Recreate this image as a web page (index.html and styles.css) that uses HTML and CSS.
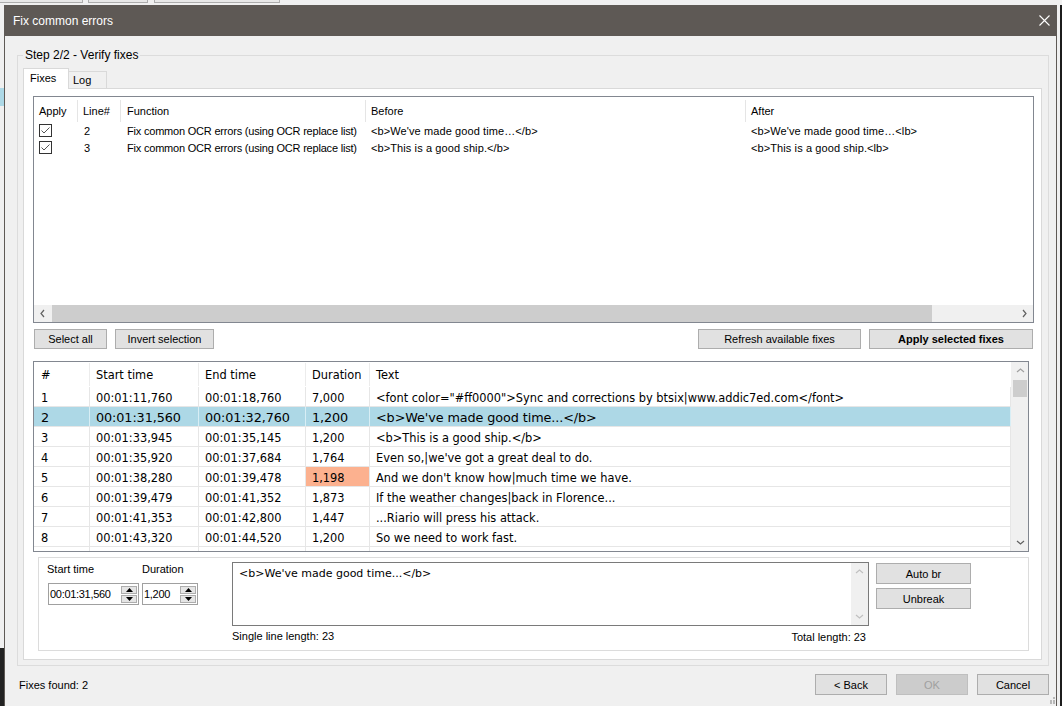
FILE: index.html
```html
<!DOCTYPE html>
<html lang="en">
<head>
    <meta charset="UTF-8">
    <title>Fix common errors</title>
    <link rel="stylesheet" href="styles.css">
</head>
<body>
<div class="desk">
    <div class="desk-top">
        <div class="ghost g1"></div>
        <div class="ghost g2"></div>
        <div class="ghost g3"></div>
    </div>
    <div class="desk-row">
        <div class="desk-left"></div>
        <div class="window">
            <div class="titlebar">
                <span class="title">Fix common errors</span>
                <svg class="close" width="11" height="11" viewBox="0 0 11 11">
                    <path d="M0.5 0.5 L10.5 10.5 M10.5 0.5 L0.5 10.5" stroke="#fff" stroke-width="1.1"/>
                </svg>
            </div>
            <div class="win-body">
                <fieldset class="group">
                    <legend>Step 2/2 - Verify fixes</legend>
                    <div class="tabs">
                        <div class="tab active">Fixes</div>
                        <div class="tab">Log</div>
                    </div>
                    <div class="tab-page">
                        <!-- fixes list -->
                        <div class="lv">
                            <div class="lv-head">
                                <div class="lc c1">Apply</div>
                                <div class="lc c2">Line#</div>
                                <div class="lc c3">Function</div>
                                <div class="lc c4">Before</div>
                                <div class="lc c5">After</div>
                            </div>
                            <div class="lv-row">
                                <div class="lc c1"><svg class="chk" width="13" height="13" viewBox="0 0 13 13"><rect x="0.5" y="0.5" width="12" height="12" fill="#fff" stroke="#333"/><path d="M2.5 6.5 L5 9 L10.5 3.5" fill="none" stroke="#555" stroke-width="1"/></svg></div>
                                <div class="lc c2">2</div>
                                <div class="lc c3">Fix common OCR errors (using OCR replace list)</div>
                                <div class="lc c4">&lt;b&gt;We've made good time…&lt;/b&gt;</div>
                                <div class="lc c5">&lt;b&gt;We've made good time…&lt;lb&gt;</div>
                            </div>
                            <div class="lv-row">
                                <div class="lc c1"><svg class="chk" width="13" height="13" viewBox="0 0 13 13"><rect x="0.5" y="0.5" width="12" height="12" fill="#fff" stroke="#333"/><path d="M2.5 6.5 L5 9 L10.5 3.5" fill="none" stroke="#555" stroke-width="1"/></svg></div>
                                <div class="lc c2">3</div>
                                <div class="lc c3">Fix common OCR errors (using OCR replace list)</div>
                                <div class="lc c4">&lt;b&gt;This is a good ship.&lt;/b&gt;</div>
                                <div class="lc c5">&lt;b&gt;This is a good ship.&lt;lb&gt;</div>
                            </div>
                            <div class="lv-fill"></div>
                            <div class="hscroll">
                                <svg class="arr" width="17" height="17" viewBox="0 0 17 17"><path d="M10 5 L7 8.5 L10 12" fill="none" stroke="#606060" stroke-width="1.2"/></svg>
                                <div class="h-track"><div class="h-thumb"></div></div>
                                <svg class="arr" width="17" height="17" viewBox="0 0 17 17"><path d="M7 5 L10 8.5 L7 12" fill="none" stroke="#606060" stroke-width="1.2"/></svg>
                            </div>
                        </div>

                        <div class="btn-row">
                            <div class="btn-set">
                                <button class="btn w-sel">Select all</button>
                                <button class="btn w-inv">Invert selection</button>
                            </div>
                            <div class="btn-set">
                                <button class="btn w-ref">Refresh available fixes</button>
                                <button class="btn w-app bold">Apply selected fixes</button>
                            </div>
                        </div>

                        <!-- subtitle grid -->
                        <div class="grid">
                            <div class="grid-main">
                                <div class="g-head">
                                    <div class="gc k1">#</div>
                                    <div class="gc k2">Start time</div>
                                    <div class="gc k3">End time</div>
                                    <div class="gc k4">Duration</div>
                                    <div class="gc k5">Text</div>
                                </div>
                                <div class="g-row">
                                    <div class="gc k1">1</div><div class="gc k2">00:01:11,760</div><div class="gc k3">00:01:18,760</div><div class="gc k4">7,000</div><div class="gc k5">&lt;font color="#ff0000"&gt;Sync and corrections by btsix|www.addic7ed.com&lt;/font&gt;</div>
                                </div>
                                <div class="g-row selected">
                                    <div class="gc k1">2</div><div class="gc k2">00:01:31,560</div><div class="gc k3">00:01:32,760</div><div class="gc k4">1,200</div><div class="gc k5">&lt;b&gt;We've made good time...&lt;/b&gt;</div>
                                </div>
                                <div class="g-row">
                                    <div class="gc k1">3</div><div class="gc k2">00:01:33,945</div><div class="gc k3">00:01:35,145</div><div class="gc k4">1,200</div><div class="gc k5">&lt;b&gt;This is a good ship.&lt;/b&gt;</div>
                                </div>
                                <div class="g-row">
                                    <div class="gc k1">4</div><div class="gc k2">00:01:35,920</div><div class="gc k3">00:01:37,684</div><div class="gc k4">1,764</div><div class="gc k5">Even so,|we've got a great deal to do.</div>
                                </div>
                                <div class="g-row">
                                    <div class="gc k1">5</div><div class="gc k2">00:01:38,280</div><div class="gc k3">00:01:39,478</div><div class="gc k4 warn">1,198</div><div class="gc k5">And we don't know how|much time we have.</div>
                                </div>
                                <div class="g-row">
                                    <div class="gc k1">6</div><div class="gc k2">00:01:39,479</div><div class="gc k3">00:01:41,352</div><div class="gc k4">1,873</div><div class="gc k5">If the weather changes|back in Florence...</div>
                                </div>
                                <div class="g-row">
                                    <div class="gc k1">7</div><div class="gc k2">00:01:41,353</div><div class="gc k3">00:01:42,800</div><div class="gc k4">1,447</div><div class="gc k5">...Riario will press his attack.</div>
                                </div>
                                <div class="g-row">
                                    <div class="gc k1">8</div><div class="gc k2">00:01:43,320</div><div class="gc k3">00:01:44,520</div><div class="gc k4">1,200</div><div class="gc k5">So we need to work fast.</div>
                                </div>
                                <div class="g-row partial">
                                    <div class="gc k1"></div><div class="gc k2"></div><div class="gc k3"></div><div class="gc k4"></div><div class="gc k5"></div>
                                </div>
                            </div>
                            <div class="vscroll">
                                <svg width="17" height="17" viewBox="0 0 17 17"><path d="M5 10 L8.5 7 L12 10" fill="none" stroke="#a0a0a0" stroke-width="1.2"/></svg>
                                <div class="v-track"><div class="v-thumb"></div></div>
                                <svg width="17" height="17" viewBox="0 0 17 17"><path d="M5 7 L8.5 10 L12 7" fill="none" stroke="#606060" stroke-width="1.2"/></svg>
                            </div>
                        </div>

                        <!-- current line editor -->
                        <div class="edit">
                            <div class="edit-left">
                                <div class="field f-start">
                                    <label>Start time</label>
                                    <div class="spin">
                                        <span class="spin-val">00:01:31,560</span>
                                        <div class="spin-btns">
                                            <div class="spin-b"><svg width="7" height="4" viewBox="0 0 7 4"><path d="M0 4 L3.5 0 L7 4 Z" fill="#000"/></svg></div>
                                            <div class="spin-b"><svg width="7" height="4" viewBox="0 0 7 4"><path d="M0 0 L3.5 4 L7 0 Z" fill="#000"/></svg></div>
                                        </div>
                                    </div>
                                </div>
                                <div class="field f-dur">
                                    <label>Duration</label>
                                    <div class="spin">
                                        <span class="spin-val">1,200</span>
                                        <div class="spin-btns">
                                            <div class="spin-b"><svg width="7" height="4" viewBox="0 0 7 4"><path d="M0 4 L3.5 0 L7 4 Z" fill="#000"/></svg></div>
                                            <div class="spin-b"><svg width="7" height="4" viewBox="0 0 7 4"><path d="M0 0 L3.5 4 L7 0 Z" fill="#000"/></svg></div>
                                        </div>
                                    </div>
                                </div>
                            </div>
                            <div class="edit-mid">
                                <div class="textbox">
                                    <div class="tb-text">&lt;b&gt;We've made good time...&lt;/b&gt;</div>
                                    <div class="tb-scroll">
                                        <svg width="17" height="17" viewBox="0 0 17 17"><path d="M5 10 L8.5 7 L12 10" fill="none" stroke="#c0c0c0" stroke-width="1.2"/></svg>
                                        <svg width="17" height="17" viewBox="0 0 17 17"><path d="M5 7 L8.5 10 L12 7" fill="none" stroke="#c0c0c0" stroke-width="1.2"/></svg>
                                    </div>
                                </div>
                                <div class="lengths">
                                    <span>Single line length: 23</span>
                                    <span class="total">Total length: 23</span>
                                </div>
                            </div>
                            <div class="edit-right">
                                <button class="btn w-small">Auto br</button>
                                <button class="btn w-small">Unbreak</button>
                            </div>
                        </div>
                    </div>
                </fieldset>

                <div class="footer">
                    <span class="found">Fixes found: 2</span>
                    <div class="footer-btns">
                        <button class="btn w-foot">&lt; Back</button>
                        <button class="btn w-foot disabled">OK</button>
                        <button class="btn w-foot">Cancel</button>
                    </div>
                </div>
                <svg class="grip" width="7" height="7" viewBox="0 0 7 7"><g fill="#b8b8b8"><rect x="5" y="0" width="2" height="2"/><rect x="5" y="3" width="2" height="2"/><rect x="2" y="3" width="2" height="2"/><rect x="5" y="5" width="2" height="2"/><rect x="2" y="5" width="2" height="2"/></g></svg>
            </div>
        </div>
        <div class="desk-right"></div>
    </div>
</div>
</body>
</html>
```

FILE: styles.css
```css
* {
    box-sizing: border-box;
}
body {
    margin: 0;
    font-family: "Liberation Sans", Arial, sans-serif;
    font-size: 11px;
    color: #000;
    background: #f0f0f0;
    overflow: hidden;
}
.desk {
    width: 1062px;
    height: 706px;
}
.desk-top {
    height: 5px;
    display: flex;
    background: #f0f0f0;
}
.ghost {
    height: 3px;
    border-bottom: 1px solid #adadad;
    border-right: 1px solid #adadad;
    background: #e8e8e8;
}
.g1 { width: 83px; }
.g2 { width: 60px; margin-left: 5px; border-left: 1px solid #adadad; }
.g3 { width: 126px; margin-left: 6px; border-left: 1px solid #adadad; }
.desk-row {
    display: flex;
    height: 701px;
}
.desk-left {
    width: 4px;
    background: linear-gradient(to bottom, #f0f0f0 0, #f0f0f0 83px, #add8e6 83px, #add8e6 101px, #f0f0f0 101px, #f0f0f0 643px, #222 643px);
}
.desk-right {
    width: 5px;
    background: linear-gradient(to right, #f0f0f0 0, #f0f0f0 3px, #1c1c1c 3px);
}

/* window */
.window {
    width: 1053px;
    height: 701px;
    border: 1px solid #5e5955;
    border-bottom: none;
    background: #f0f0f0;
    display: flex;
    flex-direction: column;
}
.titlebar {
    height: 30px;
    background: #5e5955;
    display: flex;
    align-items: center;
    justify-content: space-between;
    padding: 0 6px 0 8px;
    flex-shrink: 0;
}
.title {
    color: #fff;
    font-size: 12px;
    margin-top: -1px;
}
.close {
    margin-top: -1px;
}
.win-body {
    flex: 1;
    position: relative;
    padding: 12px 0 0 12px;
}

/* group box */
.group {
    width: 1032px;
    margin: 0;
    padding: 6px 6px 5px 5px;
    border: 1px solid #dcdcdc;
}
.group legend {
    font-size: 12px;
    line-height: 14px;
    padding: 0 2px;
    color: #000;
}
.tabs {
    display: flex;
    align-items: flex-end;
    height: 20px;
}
.tab {
    height: 17px;
    padding: 0 0 0 4px;
    width: 38px;
    border: 1px solid #d9d9d9;
    border-left: none;
    border-bottom: none;
    background: #f0f0f0;
    line-height: 17px;
}
.tab.active {
    width: 46px;
    height: 21px;
    margin-bottom: -1px;
    border-left: 1px solid #d9d9d9;
    background: #fff;
    padding-left: 6px;
    line-height: 19px;
    position: relative;
    z-index: 1;
}
.tab-page {
    width: 1019px;
    height: 572px;
    border: 1px solid #d9d9d9;
    background: #fff;
    padding: 7px 0 0 9px;
}

/* fixes list */
.lv {
    width: 1001px;
    height: 227px;
    border: 1px solid #828790;
    display: flex;
    flex-direction: column;
}
.lv-head {
    display: flex;
    height: 25px;
    padding-top: 2px;
    align-items: center;
    flex-shrink: 0;
}
.lv-head .lc {
    height: 22px;
    line-height: 22px;
    border-right: 1px solid #e5e5e5;
}
.lv-head .c5 {
    border-right: none;
}
.lv-row {
    display: flex;
    height: 17px;
    align-items: center;
    flex-shrink: 0;
}
.lc {
    padding-left: 5px;
    white-space: nowrap;
    overflow: hidden;
}
.c1 { width: 44px; }
.c2 { width: 43px; }
.c3 { width: 245px; padding-left: 6px; }
.c4 { width: 380px; }
.c5 { flex: 1; }
.lv-row .c3 {
    letter-spacing: -0.2px;
}
.lv-row .c4,
.lv-row .c5 {
    letter-spacing: 0.1px;
}
.lv-row .c1 {
    display: flex;
    align-items: center;
}
.lv-row .c2 {
    padding-left: 6px;
}
.chk {
    display: block;
}
.lv-fill {
    flex: 1;
}
.hscroll {
    height: 17px;
    display: flex;
    background: #f0f0f0;
    flex-shrink: 0;
}
.h-track {
    flex: 1;
    padding: 0 84px 0 1px;
}
.h-thumb {
    height: 17px;
    background: #cdcdcd;
}

/* buttons */
.btn-row {
    width: 1001px;
    height: 20px;
    margin-top: 6px;
    padding: 0 1px;
    display: flex;
    justify-content: space-between;
}
.btn-set {
    display: flex;
    gap: 8px;
}
.btn {
    font-family: "Liberation Sans", Arial, sans-serif;
    font-size: 11px;
    color: #000;
    background: #e1e1e1;
    border: 1px solid #adadad;
    border-radius: 0;
    padding: 0;
    height: 20px;
    cursor: pointer;
}
.btn.bold {
    font-weight: bold;
}
.w-sel { width: 73px; }
.w-inv { width: 99px; }
.w-ref { width: 163px; }
.w-app { width: 164px; }

/* subtitle grid */
.grid {
    width: 996px;
    height: 191px;
    margin-top: 12px;
    border: 1px solid #828790;
    display: flex;
    font-family: "DejaVu Sans", Verdana, sans-serif;
    font-size: 11.4px;
}
.grid-main {
    flex: 1;
    overflow: hidden;
}
.g-head {
    display: flex;
    height: 25px;
    align-items: center;
}
.g-head .gc {
    height: 23px;
    padding-top: 2px;
    line-height: 21px;
    border-right: 1px solid #ececec;
}
.g-head .k5 {
    border-right: none;
}
.g-row {
    display: flex;
    height: 20px;
    border-bottom: 1px solid #e6e6e6;
}
.gc {
    padding-left: 6px;
    padding-top: 4px;
    white-space: nowrap;
    overflow: hidden;
    line-height: 15px;
    border-right: 1px solid #e6e6e6;
}
.k1 { width: 56px; padding-left: 7px; }
.k2 { width: 109px; }
.k3 { width: 107px; }
.k4 { width: 64px; }
.k5 { flex: 1; }
.g-row.selected {
    background: #add8e6;
    font-size: 12.8px;
    letter-spacing: -0.1px;
}
.g-row.selected .gc {
    border-right-color: #d8eef5;
    padding-top: 3px;
}
.g-row.partial {
    height: 4px;
    border-bottom: none;
}
.warn {
    background: #fcb18f;
}
.vscroll {
    width: 17px;
    background: #f0f0f0;
    display: flex;
    flex-direction: column;
    border-left: 1px solid #f0f0f0;
}
.vscroll svg {
    display: block;
    flex-shrink: 0;
}
.v-track {
    flex: 1;
    padding-top: 1px;
}
.v-thumb {
    height: 17px;
    margin: 0 1px;
    background: #cdcdcd;
}

/* line editor */
.edit {
    width: 991px;
    height: 94px;
    margin: 5px 0 0 5px;
    border: 1px solid #dcdcdc;
    display: flex;
}
.edit-left {
    width: 193px;
    display: flex;
    padding: 4px 0 0 8px;
    gap: 3px;
}
.field label {
    display: block;
    height: 16px;
    line-height: 15px;
    margin-bottom: 5px;
}
.f-start .spin { width: 91px; margin-left: 1px; }
.f-dur .spin { width: 56px; }
.spin {
    height: 22px;
    border: 1px solid #a0a0a0;
    background: #fff;
    display: flex;
    align-items: center;
    justify-content: space-between;
    padding: 0 1px;
}
.spin-val {
    font-size: 11px;
    letter-spacing: -0.3px;
}
.spin-btns {
    display: flex;
    flex-direction: column;
    width: 16px;
    gap: 1px;
}
.spin-b {
    height: 8px;
    background: #e5e5e5;
    border: 1px solid #adadad;
    display: flex;
    align-items: center;
    justify-content: center;
}
.spin-b svg {
    display: block;
}
.edit-mid {
    width: 637px;
    padding-top: 4px;
}
.textbox {
    height: 64px;
    border: 1px solid #7a7a7a;
    background: #fff;
    display: flex;
}
.tb-text {
    flex: 1;
    padding: 4px 0 0 6px;
    font-family: "DejaVu Sans", Verdana, sans-serif;
    font-size: 11px;
}
.tb-scroll {
    width: 17px;
    background: #f0f0f0;
    display: flex;
    flex-direction: column;
    justify-content: space-between;
}
.tb-scroll svg {
    display: block;
}
.lengths {
    display: flex;
    justify-content: space-between;
    padding: 2px 3px 0 0;
    line-height: 16px;
}
.total {
    margin-top: 1px;
}
.edit-right {
    padding: 5px 0 0 7px;
    display: flex;
    flex-direction: column;
    gap: 4px;
}
.w-small {
    width: 95px;
    height: 21px;
}

/* footer */
.footer {
    display: flex;
    justify-content: space-between;
    align-items: center;
    margin: 8px 7px 0 2px;
    height: 21px;
}
.footer-btns {
    display: flex;
    gap: 9px;
}
.w-foot {
    width: 72px;
    height: 21px;
}
.w-foot.disabled {
    background: #cccccc;
    border-color: #bfbfbf;
    color: #a0a0a0;
}
.grip {
    position: absolute;
    right: 1px;
    bottom: 2px;
}
```
